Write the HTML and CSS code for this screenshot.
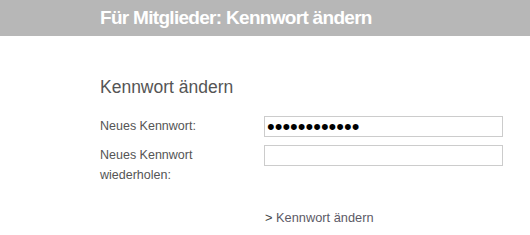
FILE: index.html
```html
<!DOCTYPE html>
<html lang="de">
<head>
    <meta charset="UTF-8">
    <title>Für Mitglieder: Kennwort ändern</title>
    <link rel="stylesheet" href="styles.css">
</head>
<body>
    <div class="header">
        <h1>Für Mitglieder: Kennwort ändern</h1>
    </div>
    <div class="content">
        <h2>Kennwort ändern</h2>
        <form class="pw-form">
            <div class="row">
                <label for="pw1">Neues Kennwort:</label>
                <input type="password" id="pw1" value="geheim123456">
            </div>
            <div class="row">
                <label for="pw2">Neues Kennwort<br>wiederholen:</label>
                <input type="password" id="pw2">
            </div>
            <div class="submit-row">
                <a href="#" class="submit-link"><span class="arrow">&gt;</span> Kennwort ändern</a>
            </div>
        </form>
    </div>
</body>
</html>
```

FILE: styles.css
```css
body {
    margin: 0;
    font-family: Arial, "Liberation Sans", sans-serif;
    color: #555;
    background: #fff;
}

.header {
    background: #b7b7b7;
    height: 36px;
    padding-left: 100px;
}

.header h1 {
    margin: 0;
    font-size: 19px;
    letter-spacing: -0.7px;
    line-height: 35px;
    color: #fff;
    font-weight: bold;
}

.content {
    padding: 40px 0 0 100px;
}

.content h2 {
    margin: 0 0 18px;
    font-size: 17.5px;
    font-weight: normal;
    color: #555;
    line-height: 22px;
}

.row {
    display: flex;
    align-items: flex-start;
    margin-bottom: 8px;
}

.row label {
    width: 164px;
    font-size: 12.5px;
    line-height: 20px;
}

.row input {
    width: 233px;
    height: 17px;
    border: 1px solid #ccc;
    padding: 1px 2px;
    margin: 0;
    font-family: Arial, "Liberation Sans", sans-serif;
    font-size: 22px;
    color: #000;
}

.submit-row {
    padding: 15px 0 0 165px;
}

.submit-link {
    font-size: 12.8px;
    color: #5c5a66;
    text-decoration: none;
}

.arrow {
    color: #444;
}
```
